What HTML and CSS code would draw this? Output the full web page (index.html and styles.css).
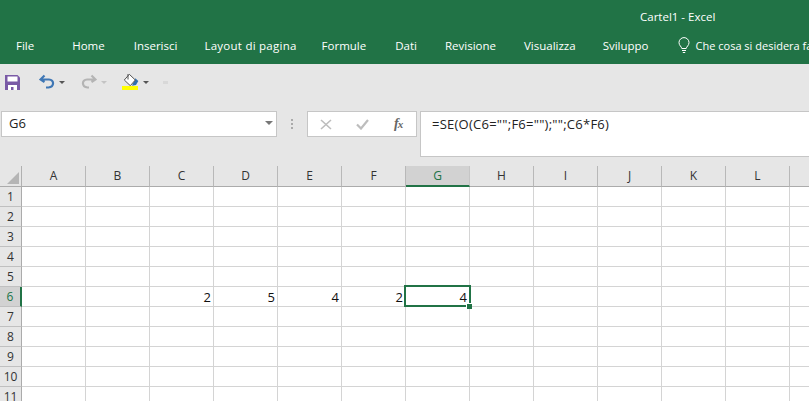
FILE: index.html
```html
<!DOCTYPE html>
<html lang="it">
<head>
<meta charset="utf-8">
<title>Cartel1 - Excel</title>
<link rel="stylesheet" href="styles.css">
</head>
<body>
<header class="ribbon">
  <div class="title">Cartel1 - Excel</div>
  <nav class="tabs">
    <span class="tab tab-file">File</span>
    <span class="tab tab-home">Home</span>
    <span class="tab tab-ins">Inserisci</span>
    <span class="tab tab-lay">Layout di pagina</span>
    <span class="tab tab-for">Formule</span>
    <span class="tab tab-dat">Dati</span>
    <span class="tab tab-rev">Revisione</span>
    <span class="tab tab-vis">Visualizza</span>
    <span class="tab tab-svi">Sviluppo</span>
    <span class="tell">
      <svg class="bulb" width="12" height="17" viewBox="0 0 12 17"><path d="M3.8 11.5C3.6 9.6 1 8.600 1 5.600A5 5 0 0 1 11 5.600C11 8.600 8.400 9.600 8.200 11.500ZM4 13.500H8M4.800 15.500H7.200" fill="none" stroke="#fff" stroke-width="1"/></svg>
      <span class="tell-text">Che cosa si desidera fare?</span>
    </span>
  </nav>
</header>
<section class="qat">
  <svg class="ic-save" width="15" height="15" viewBox="0 0 15 15"><path d="M0 0H12.500L15 2.500V15H0Z" fill="#7a5aa6"/><rect x="2.500" y="1.500" width="10" height="5" fill="#fff"/><rect x="3" y="10" width="9" height="5" fill="#fff"/><rect x="6" y="12" width="2.500" height="3" fill="#7a5aa6"/></svg>
  <svg class="ic-undo" width="16" height="15" viewBox="0 0 16 15"><path d="M5.500 1.500L1.500 5.500L5.500 8M2 5.500H10C15.500 5.500 15.500 13 9.500 13.500H7" fill="none" stroke="#3f77b5" stroke-width="2.200"/></svg>
  <span class="caret"></span>
  <svg class="ic-redo" width="16" height="15" viewBox="0 0 16 15"><path d="M10.500 1.500L14.500 5.500L10.500 8M14 5.500H6C0.500 5.500 0.500 13 6.500 13.500H8" fill="none" stroke="#b4b4b4" stroke-width="2.200"/></svg>
  <span class="caret caret-off"></span>
  <svg class="ic-fill" width="17" height="17" viewBox="0 0 17 17"><path d="M13.300 5.300L16.300 8L14 12L10 12.700Z" fill="#2f6fae"/><path d="M2.300 7L7.300 1.300L13.300 7L8.300 12.700Z" fill="#fff" stroke="#555" stroke-width="1"/><path d="M6 1V6.500" fill="none" stroke="#555" stroke-width="1"/><rect x="0" y="13" width="16" height="4" fill="#ffff00"/></svg>
  <span class="caret"></span>
  <span class="qat-more"></span>
</section>
<section class="formula-row">
  <div class="namebox"><span>G6</span><span class="caret caret-name"></span></div>
  <div class="grip"><i></i><i></i><i></i></div>
  <div class="fx-box">
    <svg width="12" height="11" viewBox="0 0 12 11"><path d="M1 1L11 10M11 1L1 10" stroke="#bdbdbd" stroke-width="1.600" fill="none"/></svg>
    <svg width="13" height="11" viewBox="0 0 13 11"><path d="M1 5.500L5 9.500L12 1" stroke="#bdbdbd" stroke-width="2.200" fill="none"/></svg>
    <span class="fx"><i>f</i><i class="fx-x">x</i></span>
  </div>
  <div class="formula">=SE(O(C6="";F6="");"";C6*F6)</div>
</section>
<main class="sheet">
  <div class="grid">
    <div class="corner"><span class="tri"></span></div>
    <div class="ch">A</div><div class="ch">B</div><div class="ch">C</div><div class="ch">D</div><div class="ch">E</div><div class="ch">F</div><div class="ch ch-sel">G</div><div class="ch">H</div><div class="ch">I</div><div class="ch">J</div><div class="ch">K</div><div class="ch">L</div><div class="ch"></div>

    <div class="rh">1</div><div class="c"></div><div class="c"></div><div class="c"></div><div class="c"></div><div class="c"></div><div class="c"></div><div class="c"></div><div class="c"></div><div class="c"></div><div class="c"></div><div class="c"></div><div class="c"></div><div class="c"></div>
    <div class="rh">2</div><div class="c"></div><div class="c"></div><div class="c"></div><div class="c"></div><div class="c"></div><div class="c"></div><div class="c"></div><div class="c"></div><div class="c"></div><div class="c"></div><div class="c"></div><div class="c"></div><div class="c"></div>
    <div class="rh">3</div><div class="c"></div><div class="c"></div><div class="c"></div><div class="c"></div><div class="c"></div><div class="c"></div><div class="c"></div><div class="c"></div><div class="c"></div><div class="c"></div><div class="c"></div><div class="c"></div><div class="c"></div>
    <div class="rh">4</div><div class="c"></div><div class="c"></div><div class="c"></div><div class="c"></div><div class="c"></div><div class="c"></div><div class="c"></div><div class="c"></div><div class="c"></div><div class="c"></div><div class="c"></div><div class="c"></div><div class="c"></div>
    <div class="rh">5</div><div class="c"></div><div class="c"></div><div class="c"></div><div class="c"></div><div class="c"></div><div class="c"></div><div class="c"></div><div class="c"></div><div class="c"></div><div class="c"></div><div class="c"></div><div class="c"></div><div class="c"></div>
    <div class="rh rh-sel">6</div><div class="c"></div><div class="c"></div><div class="c">2</div><div class="c">5</div><div class="c">4</div><div class="c">2</div><div class="c c-sel">4<span class="sel"><span class="handle"></span></span></div><div class="c"></div><div class="c"></div><div class="c"></div><div class="c"></div><div class="c"></div><div class="c"></div>
    <div class="rh">7</div><div class="c"></div><div class="c"></div><div class="c"></div><div class="c"></div><div class="c"></div><div class="c"></div><div class="c"></div><div class="c"></div><div class="c"></div><div class="c"></div><div class="c"></div><div class="c"></div><div class="c"></div>
    <div class="rh">8</div><div class="c"></div><div class="c"></div><div class="c"></div><div class="c"></div><div class="c"></div><div class="c"></div><div class="c"></div><div class="c"></div><div class="c"></div><div class="c"></div><div class="c"></div><div class="c"></div><div class="c"></div>
    <div class="rh">9</div><div class="c"></div><div class="c"></div><div class="c"></div><div class="c"></div><div class="c"></div><div class="c"></div><div class="c"></div><div class="c"></div><div class="c"></div><div class="c"></div><div class="c"></div><div class="c"></div><div class="c"></div>
    <div class="rh">10</div><div class="c"></div><div class="c"></div><div class="c"></div><div class="c"></div><div class="c"></div><div class="c"></div><div class="c"></div><div class="c"></div><div class="c"></div><div class="c"></div><div class="c"></div><div class="c"></div><div class="c"></div>
    <div class="rh">11</div><div class="c"></div><div class="c"></div><div class="c"></div><div class="c"></div><div class="c"></div><div class="c"></div><div class="c"></div><div class="c"></div><div class="c"></div><div class="c"></div><div class="c"></div><div class="c"></div><div class="c"></div>
  </div>
</main>
</body>
</html>
```
FILE: styles.css
```css
* { box-sizing: border-box; }
html, body { margin: 0; height: 100%; overflow: hidden; }
body { width: 809px; height: 401px; background: #e6e6e6; font-family: "Open Sans", "Noto Sans", sans-serif; color: #222; }

.ribbon { height: 64px; background: #217346; color: #fff; display: flex; flex-direction: column; }
.title { height: 34px; padding: 9px 0 0 640px; font-size: 11.5px; line-height: 16px; white-space: nowrap; }
.tabs { display: flex; align-items: center; height: 22px; padding-left: 16px; font-size: 11.5px; white-space: nowrap; overflow: hidden; }
.tab-file { margin-right: 38px; margin-top: 1px; }
.tab-home { margin-right: 29px; }
.tab-ins { margin-right: 27px; }
.tab-lay { margin-right: 25px; letter-spacing: 0.25px; }
.tab-for { margin-right: 29px; }
.tab-dat { margin-right: 28px; }
.tab-rev { margin-right: 28px; }
.tab-vis { margin-right: 27px; }
.tab-svi { margin-right: 29px; }
.tell { display: flex; align-items: center; gap: 6px; font-size: 11px; }
.bulb { flex: none; }

.qat { height: 38px; padding: 9px 0 0 5px; display: flex; align-items: flex-start; }
.ic-save { margin-top: 2px; margin-right: 19px; }
.ic-undo { margin-top: 1px; margin-right: 4px; }
.ic-redo { margin-top: 1px; margin-left: 16px; margin-right: 4px; }
.ic-fill { margin-left: 15px; margin-right: 4px; }
.caret { width: 0; height: 0; border-left: 3px solid transparent; border-right: 3px solid transparent; border-top: 3px solid #555; margin-top: 8px; }
.caret-off { border-top-color: #c4c4c4; }
.qat-more { width: 5px; height: 5px; margin: 8px 0 0 14px; border-top: 3px solid #d8d8d8; }

.formula-row { height: 64px; padding: 9px 0 0 1px; display: flex; align-items: flex-start; }
.namebox { width: 276px; height: 26px; background: #fff; border: 1px solid #c6c6c6; display: flex; align-items: center; justify-content: space-between; padding: 0 3px 2px 7px; font-size: 13px; }
.caret-name { margin-top: 0; border-left-width: 4px; border-right-width: 4px; border-top-width: 4px; border-top-color: #777; }
.grip { width: 30px; height: 26px; display: flex; flex-direction: column; align-items: center; justify-content: center; gap: 2px; }
.grip i { width: 2px; height: 2px; background: #aaa; }
.fx-box { width: 110px; height: 26px; background: #fff; border: 1px solid #c6c6c6; display: flex; align-items: center; padding-left: 12px; gap: 24px; }
.fx { font-family: "Liberation Serif", serif; font-size: 14px; font-weight: 700; color: #666; letter-spacing: -1px; margin-left: 1px; }
.fx-x { font-size: 11px; }
.formula { width: 389px; height: 46px; margin-left: 3px; background: #fff; border: 1px solid #c6c6c6; border-right: 0; padding: 3px 0 0 11px; font-size: 13px; letter-spacing: 0.25px; line-height: 18px; white-space: nowrap; }

.sheet { height: 235px; overflow: hidden; }
.grid { display: grid; grid-template-columns: 22px repeat(13, 64px); grid-template-rows: 21px; grid-auto-rows: 20px; width: 854px; }
.corner { position: relative; background: #e6e6e6; border-right: 1px solid #b0b0b0; border-bottom: 1px solid #ababab; }
.tri { position: absolute; right: 2px; bottom: 2px; width: 0; height: 0; border-left: 12px solid transparent; border-bottom: 12px solid #b5b5b5; }
.ch { background: #e6e6e6; border-right: 1px solid #b8b8b8; border-bottom: 1px solid #ababab; text-align: center; font-size: 12px; line-height: 20px; color: #333; }
.ch-sel { background: #d2d2d2; color: #217346; border-bottom: 2px solid #217346; border-right-color: #c6c6c6; }
.rh { background: #e6e6e6; border-right: 1px solid #ababab; border-bottom: 1px solid #c0c0c0; text-align: center; font-size: 12px; line-height: 19px; color: #333; }
.rh-sel { background: #d2d2d2; color: #217346; border-right: 2px solid #217346; }
.c { background: #fff; border-right: 1px solid #d4d4d4; border-bottom: 1px solid #d4d4d4; text-align: right; padding-right: 2px; font-size: 13px; line-height: 21px; color: #111; }
.c-sel { position: relative; }
.sel { position: absolute; left: -2px; top: -2px; width: 67px; height: 22px; border: 2px solid #217346; }
.handle { position: absolute; right: -3px; bottom: -4px; width: 6px; height: 6px; background: #217346; border: 1px solid #fff; border-right: 0; border-bottom: 0; }
```
